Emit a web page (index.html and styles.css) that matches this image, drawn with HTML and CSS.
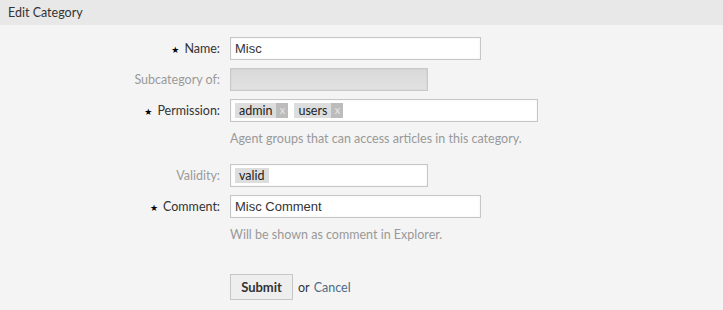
FILE: index.html
```html
<!DOCTYPE html>
<html lang="en">

<head>
    <meta charset="UTF-8">
    <meta name="viewport" content="width=device-width, initial-scale=1.0">
    <title>Edit Category</title>
    <link rel="stylesheet" href="styles.css">
</head>

<body>
    <div class="widget">
        <h2 class="widget-header">Edit Category</h2>

        <form class="category-form" id="categoryForm">
            <div class="field">
                <label class="mandatory" for="name"><span class="star">★</span>Name:</label>
                <input type="text" class="text-input wide" id="name" value="Misc">
            </div>

            <div class="field">
                <label class="disabled" for="parent">Subcategory of:</label>
                <div class="text-input medium readonly" id="parent"></div>
            </div>

            <div class="field">
                <label class="mandatory"><span class="star">★</span>Permission:</label>
                <div class="text-input large tags">
                    <span class="tag">admin<span class="tag-remove">x</span></span>
                    <span class="tag">users<span class="tag-remove">x</span></span>
                </div>
            </div>
            <p class="field-help">Agent groups that can access articles in this category.</p>

            <div class="field">
                <label class="disabled">Validity:</label>
                <div class="text-input medium tags">
                    <span class="tag single">valid</span>
                </div>
            </div>

            <div class="field">
                <label class="mandatory" for="comment"><span class="star">★</span>Comment:</label>
                <input type="text" class="text-input wide" id="comment" value="Misc Comment">
            </div>
            <p class="field-help">Will be shown as comment in Explorer.</p>

            <div class="actions">
                <button type="submit" class="submit-btn">Submit</button>
                <span>or</span>
                <a href="#" class="cancel-link">Cancel</a>
            </div>
        </form>
    </div>
</body>

</html>
```

FILE: styles.css
```css
body {
    font-family: "Lato", "Open Sans", sans-serif;
    font-size: 12.5px;
    color: #333;
    background-color: #f4f4f4;
    margin: 0;
}

.widget-header {
    margin: 0;
    height: 25px;
    line-height: 25px;
    padding: 0 8px;
    font-size: 12.5px;
    font-weight: normal;
    color: #333;
    background-color: #e8e8e8;
}

.category-form {
    padding-top: 12px;
}

.field {
    display: flex;
    align-items: center;
    margin-bottom: 8px;
}

.field label {
    width: 230px;
    padding-right: 10px;
    box-sizing: border-box;
    text-align: right;
}

label.disabled {
    color: #9a9a9a;
}

.star {
    font-family: "DejaVu Sans", sans-serif;
    font-size: 9px;
    margin-right: 5px;
    color: #000;
}

.text-input {
    height: 23px;
    box-sizing: border-box;
    border: 1px solid #c6c6c6;
    background-color: #fff;
    box-shadow: inset 0 0 2px rgba(0, 0, 0, 0.08);
    margin: 0;
    padding: 0 4px;
    font-family: "Liberation Sans", Arial, sans-serif;
    font-size: 13px;
    color: #333;
}

.wide {
    width: 251px;
}

.medium {
    width: 198px;
}

.large {
    width: 308px;
}

.readonly {
    background: linear-gradient(#d9d9d9, #e2e2e2);
    border-color: #c9c9c9;
}

.tags {
    display: flex;
    align-items: center;
    gap: 6px;
    padding-left: 4px;
}

.tag {
    display: inline-flex;
    align-items: center;
    height: 15px;
    padding-left: 4px;
    background-color: #ddd;
    font-family: "Lato", "Open Sans", sans-serif;
    font-size: 12.5px;
    color: #222;
}

.tag.single {
    padding-right: 5px;
}

.tag-remove {
    display: inline-block;
    width: 12px;
    height: 15px;
    line-height: 14px;
    margin-left: 4px;
    text-align: center;
    background-color: #bcbcbc;
    color: #e6e6e6;
    font-size: 11px;
}

.field-help {
    margin: 0 0 17px 230px;
    line-height: 16px;
    padding-top: 1px;
    color: #999;
}

.actions {
    display: flex;
    align-items: center;
    gap: 4px;
    margin-left: 230px;
    margin-top: 31px;
}

.submit-btn {
    height: 26px;
    width: 63px;
    border: 1px solid #c6c6c6;
    background-color: #eee;
    font-family: "Lato", "Open Sans", sans-serif;
    font-size: 13px;
    font-weight: bold;
    color: #333;
    cursor: pointer;
    margin-right: 1px;
}

.cancel-link {
    color: #4d6b86;
    text-decoration: none;
}
```
